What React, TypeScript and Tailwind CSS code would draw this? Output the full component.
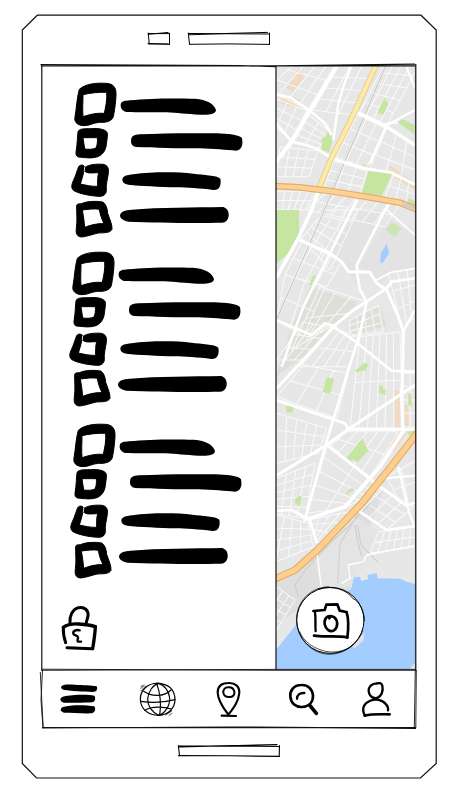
import React from "react";

type Pt = [number, number];

// Evenly spaced streets inside a four-cornered block: nx lines down, ny lines across.
function mesh(a: Pt, b: Pt, c: Pt, d: Pt, nx: number, ny: number) {
  const mix = (p: Pt, q: Pt, t: number): Pt => [p[0] + (q[0] - p[0]) * t, p[1] + (q[1] - p[1]) * t];
  let path = "";
  for (let i = 0; i <= nx; i++) path += `M${mix(a, b, i / nx)}L${mix(d, c, i / nx)}`;
  for (let j = 0; j <= ny; j++) path += `M${mix(a, d, j / ny)}L${mix(b, c, j / ny)}`;
  return path;
}

const streets = [
  mesh([85, 0], [200, 18], [118, 150], [-10, 90], 4, 3),
  mesh([-10, 105], [110, 152], [66, 240], [-30, 170], 4, 3),
  mesh([205, 18], [310, 18], [245, 165], [130, 150], 3, 4),
  mesh([110, 160], [180, 215], [145, 265], [65, 245], 2, 4),
  mesh([30, 260], [143, 273], [118, 350], [20, 350], 4, 3),
  mesh([345, 10], [450, 10], [350, 195], [270, 155], 4, 5),
  mesh([262, 165], [345, 203], [290, 325], [198, 290], 3, 3),
  mesh([350, 205], [440, 255], [440, 370], [300, 325], 3, 3),
  mesh([190, 303], [292, 332], [270, 405], [160, 388], 3, 3),
  mesh([20, 392], [140, 395], [105, 450], [20, 450], 5, 2),
  mesh([165, 400], [390, 430], [345, 500], [110, 450], 7, 2),
  mesh([370, 345], [440, 375], [440, 435], [345, 410], 3, 2),
  mesh([165, 450], [265, 450], [180, 630], [95, 535], 3, 5),
  mesh([95, 545], [215, 605], [170, 680], [45, 645], 4, 2),
  mesh([45, 645], [165, 680], [100, 830], [20, 780], 2, 2),
  mesh([150, 680], [290, 725], [190, 795], [65, 870], 3, 2),
  mesh([100, 785], [190, 805], [100, 900], [20, 900], 3, 3),
  mesh([240, 780], [325, 735], [340, 815], [240, 830], 4, 3),
  mesh([355, 640], [440, 625], [440, 770], [395, 800], 3, 3),
  mesh([190, 805], [270, 830], [235, 920], [90, 920], 4, 2),
  mesh([270, 830], [390, 815], [398, 1105], [240, 1105], 6, 2),
  mesh([100, 915], [235, 940], [200, 1075], [20, 1010], 3, 2),
  mesh([20, 1060], [170, 1105], [145, 1180], [20, 1210], 5, 3),
  mesh([20, 1255], [135, 1210], [105, 1375], [10, 1360], 4, 5),
  mesh([175, 1150], [330, 1285], [225, 1345], [110, 1360], 2, 5),
  mesh([230, 1115], [385, 1115], [300, 1250], [180, 1160], 5, 2),
  mesh([340, 1285], [430, 1340], [350, 1410], [270, 1355], 3, 3),
  mesh([350, 1250], [440, 1200], [440, 1330], [390, 1330], 2, 2),
  mesh([400, 940], [440, 940], [440, 1100], [400, 1100], 2, 4),
  mesh([325, 1415], [440, 1400], [440, 1460], [300, 1480], 6, 2),
  mesh([115, 1380], [240, 1355], [145, 1450], [130, 1420], 4, 3),
  mesh([20, 1365], [115, 1390], [130, 1460], [-20, 1520], 4, 4),
  mesh([20, 1580], [75, 1620], [20, 1710], [-50, 1680], 3, 4),
].join("");

const parks = [
  "M155 235L165 232L178 208L187 240L178 277L155 270Z",
  "M343 112L348 125L356 130L340 164L322 158Z",
  "M382 187L398 178L433 195V222Z",
  "M295 333L367 340L335 408L275 398Z",
  "M18 450H87V520L55 580L18 612Z",
  "M130 645L138 648L123 678L117 675Z",
  "M280 910L297 912L285 932L270 932L262 939L255 930L270 920Z",
  "M170 952L192 956L180 1002L158 995Z",
  "M50 1038L71 1040L67 1058L47 1056Z",
  "M328 976L338 978L338 986L347 988L346 1006L328 998Z",
  "M415 1000L423 1002L426 1040L415 1035Z",
  "M277 1135L295 1172L262 1207L250 1198L243 1203L229 1193Z",
  "M228 1298L245 1283L254 1290L240 1296L230 1306Z",
  "M82 1310L95 1307L93 1325L88 1340L75 1330L77 1316Z",
  "M410 430L418 415L435 425V440Z",
  "M410 1115L435 1112L420 1128Z",
].join("");

const roads: [number, string][] = [
  [13, "M205 10L120 150L65 245L18 305"],
  [7, "M247 10L222 75L205 130L190 240"],
  [8, "M18 103L60 112L120 152L165 190L185 225"],
  [8, "M18 190L65 245L100 253L145 268L185 295L280 325L365 338L435 374"],
  [10, "M252 153L350 200L435 256"],
  [7, "M435 150L350 196L300 310"],
  [6, "M405 10L435 85"],
  [5, "M340 192L385 188"],
  [11, "M148 385L125 450L85 535L18 655"],
  [8, "M262 420L245 450L180 580L100 740L35 920"],
  [9, "M85 538L180 580L215 605L235 635L300 637L320 670L350 690L385 770L400 815L398 930"],
  [8, "M362 425L345 450L260 615L262 645L270 690L290 725L270 820L235 930L165 1160L105 1380"],
  [8, "M290 725L350 685L365 665L435 655"],
  [5, "M320 660L360 638L435 625M345 445L435 525"],
  [9, "M290 725L250 750L190 800L105 895L18 987"],
  [8, "M190 800L250 840L365 932L435 935"],
  [8, "M18 780L125 825L165 790L200 800"],
  [7, "M435 750L400 815"],
  [9, "M18 1020L225 1090L235 1108H435"],
  [9, "M18 1247L170 1155L235 1108L435 975"],
  [8, "M170 1155L330 1280L410 1338L435 1328"],
  [9, "M393 985L399 1112M398 920L396 990"],
  [11, "M402 1110L330 1220L225 1340L130 1372L100 1380"],
  [7, "M345 1255L435 1247M385 1220L410 1330L420 1365L432 1395"],
  [8, "M18 1353L65 1350L120 1380L140 1450"],
  [8, "M255 1345L350 1410L435 1398"],
  [4, "M140 1472L155 1590"],
  [4, "M435 1457L290 1485L280 1505L235 1515L240 1555L215 1570"],
];

function StreetMap() {
  return (
    <svg className="block h-full w-full" viewBox="18 18 417 1809" preserveAspectRatio="none">
      <rect x="18" y="18" width="417" height="1809" fill="#e7e7e7" />
      <path d="M265 450H345L262 615L265 680L235 635L180 575Z M355 470L435 530V630L350 645L330 680L300 637L265 620Z" fill="#e3e3e3" />
      <path d="M120 680L260 725L250 750L190 795L100 890L18 950L60 810Z M240 775L330 740L350 800L240 825Z" fill="#dfdfda" />
      <path d="M18 1565L75 1530L150 1460L260 1350L340 1290L300 1400L270 1510L235 1600L80 1650L18 1700Z" fill="#dedede" />
      <path d="M130 1480L250 1365L330 1420L280 1510L240 1580H150Z" fill="#e4e4e4" />
      <path d="M85 25L103 50L70 95L50 85Z M35 105L95 120L85 145L30 130Z M374 990H390V1105H372Z M404 1035H416V1105H404Z M375 1130L410 1120L370 1175L355 1160Z M275 310L298 318L290 335L278 328Z M360 315L435 370V390L355 342Z" fill="#eedbc4" />
      <path d="M350 552L357 580L340 607L330 608L333 580Z" fill="#a3ccff" />
      <path
        d="M18 1770L75 1698L150 1620L240 1590L245 1582L252 1552L270 1550L273 1562L295 1558L292 1545L320 1540L323 1555L390 1556L410 1565L435 1572V1827H18Z"
        fill="#a3ccff"
      />
      <path d="M283 1720L280 1742L255 1764L240 1758Z M435 1808V1827H418Z" fill="#e3e3e3" />
      <path d={streets} fill="none" stroke="#fff" strokeWidth="3.2" opacity=".75" />
      <path d={parks} fill="#c5e5a0" />
      <path d="M365 487L395 505L375 531L347 510Z" fill="#cde4b5" />
      <path d="M345 18L150 475L18 780" fill="none" stroke="#fff" strokeWidth="8" opacity=".4" />
      <path d="M347 18L152 475L18 782" fill="none" stroke="#c2c2c2" strokeWidth="3" />
      <path d="M341 18L146 475" fill="none" stroke="#d8d8d8" strokeWidth="2" />
      <path
        d="M265 1360L210 1450L203 1570M255 1395L262 1440L275 1490M263 1395L273 1455L325 1508M190 1440L110 1525L75 1575L85 1610M300 1330L240 1395L180 1450"
        fill="none"
        stroke="#cfcfcf"
        strokeWidth="3.5"
      />
      <g fill="none" stroke="#fff" strokeLinejoin="round">
        {roads.map(([width, d]) => (
          <path key={d} d={d} strokeWidth={width} />
        ))}
      </g>
      <g fill="none" strokeLinejoin="round">
        <path d="M320 12L252 160L215 235L183 297L148 382" stroke="#e3cc86" strokeWidth="17" />
        <path d="M320 12L252 160L215 235L183 297L148 382" stroke="#fde9a8" strokeWidth="12" />
        <path d="M15 378L90 382L180 393L300 412L390 428L440 448" stroke="#e5ad6a" strokeWidth="20" />
        <path d="M15 378L90 382L180 393L300 412L390 428L440 448" stroke="#fdd093" strokeWidth="13" />
        <path d="M397 431L432 445" stroke="#d2cdc7" strokeWidth="12" />
        <path d="M445 1115L365 1218L275 1330L220 1388L140 1472L75 1530L12 1558" stroke="#e5a65d" strokeWidth="22" />
        <path d="M445 1115L365 1218L275 1330L220 1388L140 1472L75 1530L12 1558" stroke="#fdcf8e" strokeWidth="16" />
      </g>
    </svg>
  );
}

function ScribbleGroup({ className }: { className: string }) {
  return (
    <svg className={`block w-[200px] shrink-0 overflow-visible ${className}`} viewBox="0 0 600 540" preserveAspectRatio="xMinYMin slice">
      <g fillRule="evenodd" stroke="#000" strokeWidth="3">
        <path d="M58 58C75 42 105 38 140 40C160 42 169 52 168 75C167 100 163 125 160 140C155 155 135 158 118 157C100 158 88 168 70 167C50 165 42 155 45 140C50 115 50 85 58 58ZM69 74C90 69 115 66 140 67C142 90 137 110 133 130C110 128 90 133 69 140C67 118 69 95 69 74Z" />
        <path d="M54 186C56 176 70 176 95 176C115 174 140 178 142 190C143 200 140 215 138 230C133 250 120 261 100 263C85 265 68 262 55 261C47 258 47 250 49 240C52 222 52 200 54 186ZM69 203L112 203C113 215 112 225 108 234C98 239 85 238 74 237C73 225 70 215 69 203Z" />
        <path d="M56 290C62 282 72 285 75 292C85 284 110 281 130 283C143 286 147 295 145 310C143 325 137 345 139 362C138 375 128 380 115 379C90 377 60 372 42 362C32 355 35 343 40 332C47 318 51 302 56 290ZM72 302L78 306C85 311 100 308 116 308C112 322 113 335 113 349C95 350 75 345 61 342C66 328 69 315 72 302Z" />
        <path d="M50 406C52 400 60 402 64 401C80 394 105 392 128 396C138 402 142 415 143 430C150 450 157 465 156 478C150 490 130 488 115 489C100 492 80 500 65 501C50 500 47 490 49 475C53 450 49 425 50 406ZM67 420C85 418 105 415 118 418C120 432 125 447 132 461C112 460 92 465 74 472C73 455 70 437 67 420Z" />
      </g>
      <path d="M74 290L73 304" stroke="#fff" strokeWidth="2.5" />
      <path d="M182 104C184 92 195 93 210 91C270 84 350 85 405 86C440 88 465 103 468 121C466 134 445 135 420 134C380 133 350 128 320 127C280 127 230 127 200 126C188 123 181 115 182 104Z" />
      <path d="M213 212C214 197 222 195 240 193C310 189 400 189 470 190C500 191 540 194 546 205C550 225 545 241 528 242C500 240 460 236 420 235C360 235 280 234 228 231C217 228 212 222 213 212Z" />
      <path d="M187 329C188 317 200 316 220 313C280 305 350 306 400 311C430 315 470 315 481 326C485 345 478 361 460 360C420 355 380 353 350 352C300 350 240 348 205 344C193 341 187 337 187 329Z" />
      <path d="M180 436C182 424 195 421 215 419C300 412 400 413 490 411C503 416 507 426 506 438C504 450 498 458 486 458C400 460 290 458 205 455C190 452 180 446 180 436Z" />
    </svg>
  );
}

function LockIcon() {
  return (
    <svg className="ml-[18px] mt-[13px] block h-[48px] w-[44px]" viewBox="75 42 132 144" fill="none" stroke="#000" strokeLinecap="round" strokeLinejoin="round">
      <path d="M105 99C103 78 112 58 130 53C150 49 161 62 159 78L154 97" strokeWidth="9" />
      <path d="M85 112C97 103 115 101 132 102C150 103 170 106 181 110" strokeWidth="10" />
      <path d="M85 112C84 130 88 146 92 158" strokeWidth="9" />
      <path d="M181 110C180 135 176 158 173 176" strokeWidth="10" />
      <path d="M96 173L172 176" strokeWidth="9" />
      <path d="M134 121C124 118 113 123 115 131C118 138 128 134 129 142C130 148 124 151 129 155L138 155" strokeWidth="7" />
    </svg>
  );
}

function CameraButton() {
  return (
    <svg className="absolute left-[19px] top-[519px] h-[70px] w-[70px]" viewBox="75 225 210 210" fill="none" stroke="#000" strokeLinecap="round" strokeLinejoin="round">
      <ellipse cx="181" cy="331" rx="101" ry="99" fill="#fff" strokeWidth="3" />
      <path d="M176 230C125 232 85 268 80 320C77 380 120 431 178 433C225 432 265 402 278 362" strokeWidth="2" />
      <path d="M145 237C190 225 230 239 248 265C270 275 282 305 283 328" strokeWidth="2.5" />
      <path d="M89 365C100 395 135 421 180 426C215 427 237 417 254 400" strokeWidth="2" />
      <path d="M130 303L164 300L169 284L202 283L209 302L229 306" strokeWidth="8" />
      <path d="M135 307C138 328 135 347 137 363" strokeWidth="7" />
      <path d="M230 307C237 330 235 360 232 383" strokeWidth="8" />
      <path d="M132 377C160 382 200 376 232 382" strokeWidth="8" />
      <path d="M186 319C170 315 162 328 164 343C167 359 180 367 192 361C205 353 204 330 193 322C186 317 179 320 178 325" strokeWidth="8" />
    </svg>
  );
}

const iconProps = { fill: "none", stroke: "#000", strokeLinecap: "round", strokeLinejoin: "round" } as const;

function NavBar() {
  return (
    <nav className="ml-[42px] flex h-[58px] w-[373px] shrink-0">
      <svg className="h-[58px] w-[76px]" viewBox="21 240 228 174">
        <path d="M78 291C82 282 100 283 120 284C145 286 170 285 185 289C189 298 185 306 173 306C145 305 110 303 88 300C81 298 78 296 78 291Z" />
        <path d="M76 327C80 317 100 318 120 315C140 313 165 314 178 317C183 325 181 335 171 337C145 339 110 338 86 338C79 336 76 332 76 327Z" />
        <path d="M77 358C80 348 100 349 120 346C140 345 165 347 178 349C183 356 181 367 171 370C140 371 110 368 87 368C80 366 77 363 77 358Z" />
      </svg>
      <svg className="h-[58px] w-[76px]" viewBox="249 240 228 174" {...iconProps} strokeWidth="3.5">
        <path d="M372 280C338 278 315 301 316 329C318 358 340 376 371 376C401 375 420 354 420 328C419 300 402 281 366 280" />
        <path d="M371 280C353 285 340 305 338 326C338 349 352 366 371 376C390 370 405 348 404 324C401 300 388 286 371 280" />
        <path d="M365 280C376 310 379 345 374 376M317 334C350 339 390 337 420 329M326 304C350 321 387 321 408 300M329 361C350 348 387 350 409 357" />
        <path d="M317 295L328 286M318 302L332 288M318 289L324 286M392 375L410 363M402 376L411 370M397 370L409 362" strokeWidth="2" />
      </svg>
      <svg className="h-[58px] w-[72px]" viewBox="-63 30 216 174" {...iconProps} strokeWidth="6.5">
        <path d="M40 164C27 146 9 124 8 98C8 77 22 69 40 69C60 68 74 79 73 99C70 127 54 146 40 164Z" />
        <path d="M39 82C29 82 24 90 25 98C26 108 34 112 43 111C54 111 60 104 58 95C56 85 49 81 39 82Z" strokeWidth="6" />
        <path d="M20 167L63 168" />
      </svg>
      <svg className="h-[58px] w-[74px]" viewBox="153 30 222 174" {...iconProps} strokeWidth="8">
        <path d="M259 75C236 75 224 92 226 110C228 131 243 142 261 141C283 139 295 125 294 106C292 87 279 74 259 75Z" />
        <path d="M246 116C246 105 254 98 268 99" strokeWidth="7" />
        <path d="M285 137L304 160" strokeWidth="11" />
      </svg>
      <svg className="h-[58px] w-[75px]" viewBox="375 30 225 174" {...iconProps} strokeWidth="7">
        <path d="M486 70C470 70 460 80 461 94C463 109 473 116 486 114C501 108 505 91 502 77C499 68 492 68 484 71" />
        <path d="M449 166C439 145 447 130 464 123C482 115 502 119 513 133C519 139 520 144 519 151" />
        <path d="M449 167C473 161 500 163 524 163" strokeWidth="8" />
      </svg>
    </nav>
  );
}

// Hand-ruled device edges, laid over the screen content.
function DeviceOutline() {
  return (
    <svg className="pointer-events-none absolute inset-0 h-[798px] w-[456px]" viewBox="0 0 456 798" fill="none" stroke="#111" strokeWidth="1.2">
      <path d="M37 15.2H421L436.2 30V763.5L420.5 778H36.5L22.3 763.5V30L37.5 15" />
      <path d="M40.5 64.7L240 65.6L276 66.6M41 65.9L276 65.9L415 64.2M276 65.8H416" />
      <path d="M41.8 65V670M276 66V669.5" />
      <path d="M415.7 64V671" stroke="#333" strokeWidth="1.5" />
      <path d="M41.5 669.2L276 670.3H415M41 670.3L276 669.4H415" strokeWidth=".9" />
      <path d="M42.5 670L41 700L43 728M40.3 672L43.2 728M415.3 669L414.3 728M416.3 670L415.8 728" strokeWidth=".9" />
      <path d="M42 728L230 727L416 728.4M42 727.7H416" />
    </svg>
  );
}

export default function App() {
  return (
    <div className="relative flex h-[798px] w-[456px] flex-col overflow-hidden bg-white">
      <header className="flex h-[66px] shrink-0 gap-[16px] pl-[146px] pt-[31px]">
        <svg className="h-[16px] w-[25px]" viewBox="0 0 25 16" {...iconProps}>
          <path d="M2.3 2L3.2 13M2 3.3L22 1.5M2.5 2.6H23.5M23.5 2.2V13.4M2 12.4L23.5 13.3M3 13H22" strokeWidth="1" />
        </svg>
        <svg className="h-[16px] w-[84px]" viewBox="0 0 84 16" {...iconProps}>
          <path d="M1.3 2L2.5 13.3M2 3.8L42 2.4L80.5 1.4M1.5 2.5L82.5 3M82.5 2V13.3M2.5 13.3L42 12.9L82.5 13.4" strokeWidth="1" />
        </svg>
      </header>
      <main className="ml-[42px] flex h-[604px] w-[373px] shrink-0">
        <aside className="flex w-[234px] flex-col overflow-hidden pt-[4px]">
          <ScribbleGroup className="ml-[18px] h-[169px]" />
          <ScribbleGroup className="ml-[16px] h-[172px]" />
          <ScribbleGroup className="ml-[17px] h-[180px]" />
          <LockIcon />
        </aside>
        <section className="relative h-[603px] w-[139px] overflow-hidden">
          <StreetMap />
          <CameraButton />
        </section>
      </main>
      <NavBar />
      <footer className="ml-[177px] mt-[16px]">
        <svg className="h-[16px] w-[105px]" viewBox="0 0 105 16" {...iconProps}>
          <path d="M1.3 1.5L2.6 12M2 3L52 1.7L100 .6M1.5 1.7L102.5 2.5M102.5 1.5L102.2 12M1.5 11.6L52 11.8L102.5 12.4" strokeWidth="1.1" />
        </svg>
      </footer>
      <DeviceOutline />
    </div>
  );
}
